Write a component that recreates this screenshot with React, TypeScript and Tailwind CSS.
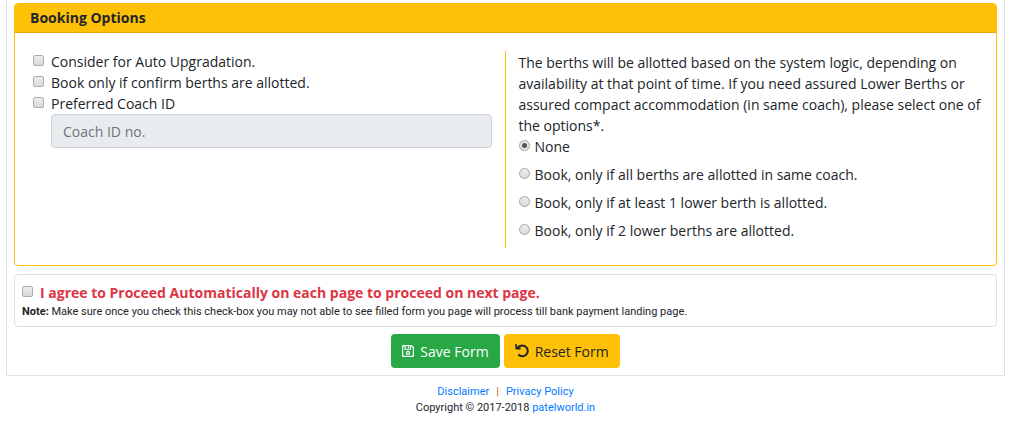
import type { InputHTMLAttributes, ReactNode } from "react";

function Tick(props: InputHTMLAttributes<HTMLInputElement>) {
  return (
    <input
      type="checkbox"
      className="h-[11px] w-[11px] shrink-0 appearance-none rounded-xs border border-[#acacac] bg-linear-to-b from-[#ededed] to-[#d9d9d9] checked:bg-[#555]"
      {...props}
    />
  );
}

function CheckRow({ id, children }: { id: string; children: ReactNode }) {
  return (
    <div className="flex items-start gap-[7px]">
      <span className="flex pt-1">
        <Tick id={id} />
      </span>
      <label htmlFor={id}>{children}</label>
    </div>
  );
}

const berthChoices = [
  "None",
  "Book, only if all berths are allotted in same coach.",
  "Book, only if at least 1 lower berth is allotted.",
  "Book, only if 2 lower berths are allotted.",
];

function SaveIcon() {
  return (
    <svg width="12" height="12" viewBox="0 0 12 12" fill="none" stroke="currentColor" aria-hidden="true">
      <path d="M1.2.6h8.2l2 2v8.2a.6.6 0 0 1-.6.6H1.2a.6.6 0 0 1-.6-.6V1.2a.6.6 0 0 1 .6-.6Z" strokeWidth="1.2" />
      <path d="M3 .8v3.4h5.6V.8M6.6 1.2v2" strokeWidth="1.1" />
      <circle cx="6" cy="7.9" r="1.5" strokeWidth="1.2" />
    </svg>
  );
}

function UndoIcon() {
  return (
    <svg width="14" height="14" viewBox="0 0 14 14" fill="none" stroke="currentColor" aria-hidden="true">
      <path d="M2.2 4.3C3.4 2.5 5.2 1.5 7.4 1.5a5.4 5.4 0 1 1-4.1 9" strokeWidth="2.1" />
      <path d="M0 .3 1.6 0l.6 3.4 3.3-.2v2.2H.7z" fill="currentColor" stroke="none" />
    </svg>
  );
}

export default function App() {
  return (
    <div className="bg-white pr-[10px] pl-[6px] font-['Open_Sans','Noto_Sans',sans-serif] text-sm leading-[21px] text-[#212529]">
      <main className="border-x border-b border-[#dee2e6] px-[7px] pt-[3px] pb-[7px]">
        <section className="rounded-sm border border-[#ffc107]">
          <h2 className="border-b border-[#e0ab0a] bg-[#ffc107] px-[15px] pt-[3px] pb-1 font-bold">
            Booking Options
          </h2>
          <div className="grid grid-cols-2 pt-[18px] pr-[5px] pb-[17px] pl-[3px]">
            <div className="pr-[13px] pl-[15px]">
              <CheckRow id="upgrade">Consider for Auto Upgradation.</CheckRow>
              <CheckRow id="confirm">Book only if confirm berths are allotted.</CheckRow>
              <CheckRow id="coach">Preferred Coach ID</CheckRow>
              <div className="pl-[18px]">
                <input
                  type="text"
                  disabled
                  aria-label="Coach ID no."
                  placeholder="Coach ID no."
                  className="h-[34px] w-full rounded-sm border border-[#ced4da] bg-[#e9ecef] px-[11px] placeholder:text-[#6c757d]"
                />
              </div>
            </div>
            <div className="border-l border-[#ffc107] pt-px pr-1 pl-[13px]">
              <p>
                The berths will be allotted based on the system logic, depending on availability at
                that point of time. If you need assured Lower Berths or assured compact accommodation
                (in same coach), please select one of the options*.
              </p>
              {berthChoices.map((choice, i) => (
                <div key={choice} className="mb-[7px] flex items-start gap-[5px]">
                  <span className="flex pt-1">
                    <input
                      type="radio"
                      name="berth"
                      id={`berth-${i}`}
                      defaultChecked={i === 0}
                      className="h-[11px] w-[11px] appearance-none rounded-full border border-[#a3a3a3] bg-linear-to-b from-[#ededed] to-[#dadada] checked:bg-[radial-gradient(circle,#555_0_2px,#e6e6e6_3px)]"
                    />
                  </span>
                  <label htmlFor={`berth-${i}`}>{choice}</label>
                </div>
              ))}
            </div>
          </div>
        </section>

        <section className="mt-2 rounded-sm border border-[#dfdfdf] px-[7px] pt-[7px] pb-[6px]">
          <div className="flex items-start gap-[7px]">
            <span className="flex pt-1">
              <Tick id="agree" />
            </span>
            <label htmlFor="agree" className="font-bold text-[#dc3545]">
              I agree to Proceed Automatically on each page to proceed on next page.
            </label>
          </div>
          <p className="pt-px font-[Roboto,sans-serif] text-[11px] leading-4">
            <b>Note:</b> Make sure once you check this check-box you may not able to see filled form
            you page will process till bank payment landing page.
          </p>
        </section>

        <div className="mt-[7px] flex justify-center gap-1">
          <button type="button" className="flex h-[34px] items-center gap-[6px] rounded-sm bg-[#28a745] px-[11px] text-white">
            <SaveIcon />
            Save Form
          </button>
          <button type="button" className="flex h-[34px] items-center gap-[6px] rounded-sm bg-[#ffc107] px-[11px]">
            <UndoIcon />
            Reset Form
          </button>
        </div>
      </main>

      <footer className="pt-2 text-center font-[Roboto,sans-serif] text-[11px] leading-4">
        <div className="flex justify-center gap-[7px]">
          <a href="#disclaimer" className="text-[#007bff]">Disclaimer</a>
          <span className="text-[#b5651d]">|</span>
          <a href="#privacy" className="text-[#007bff]">Privacy Policy</a>
        </div>
        <p>
          Copyright © 2017-2018 <a href="#home" className="text-[#007bff]">patelworld.in</a>
        </p>
      </footer>
    </div>
  );
}
